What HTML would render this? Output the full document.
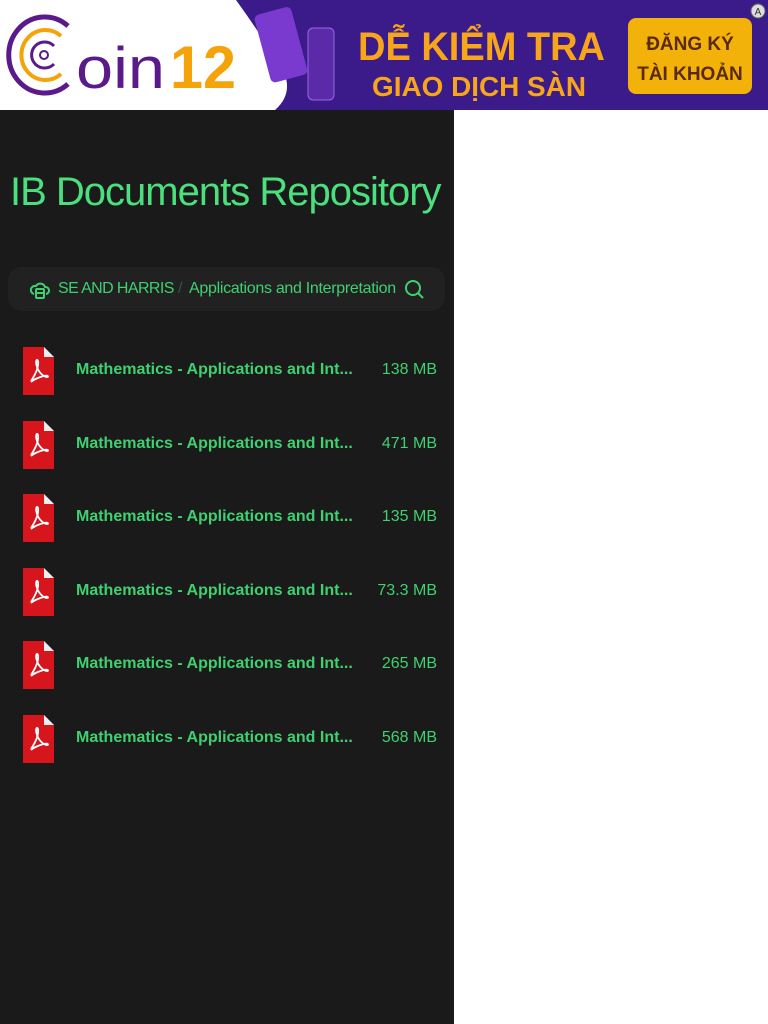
<!DOCTYPE html>
<html><head><meta charset="utf-8"><style>
*{margin:0;padding:0;box-sizing:border-box}
body{width:768px;height:1024px;background:#fff;font-family:"Liberation Sans",sans-serif;position:relative;overflow:hidden}
.ad{position:absolute;left:0;top:0;width:768px;height:110px;background:#3b1a8a;overflow:hidden}
.side{position:absolute;left:0;top:110px;width:454px;height:914px;background:#1a1a1a}
.title{position:absolute;left:10px;top:170px;font-size:40px;color:#4be07d;letter-spacing:-1px;white-space:nowrap}
.bc{position:absolute;left:8px;top:267px;width:437px;height:44px;background:#212121;border-radius:14px;color:#3fd070;font-size:16px;white-space:nowrap}
.row{position:absolute;left:0;width:454px;height:50px}
.row .name{position:absolute;left:76px;top:14px;font-size:16px;font-weight:bold;color:#3fd070}
.row .size{position:absolute;right:17px;top:14px;font-size:16px;color:#3fd070}
.row svg{position:absolute;left:23px;top:0}
</style></head><body>
<div class="ad">
<svg width="768" height="110" style="position:absolute;left:0;top:0">
<path d="M0 0H236Q265 40 285 75Q292 95 275 110H0Z" fill="#fff"/>
<g transform="translate(6 0)">
<path d="M62 26A36 38 0 1 0 62 84" fill="none" stroke="#5a1a8a" stroke-width="5"/>
<path d="M55 36A24 25 0 1 0 55 74" fill="none" stroke="#f5a30a" stroke-width="4"/>
<path d="M48 46A13 13 0 1 0 48 64" fill="none" stroke="#5a1a8a" stroke-width="3"/>
<circle cx="38" cy="55" r="4" fill="none" stroke="#5a1a8a" stroke-width="2"/>
</g>
<text x="76" y="88" font-family="Liberation Sans" font-size="58" fill="#5a1a8a" textLength="89" lengthAdjust="spacingAndGlyphs">oin</text>
<text x="170" y="88" font-family="Liberation Sans" font-weight="bold" font-size="60" fill="#f5a30a" textLength="66" lengthAdjust="spacingAndGlyphs">12</text>
<rect x="262" y="10" width="38" height="70" rx="5" fill="#7a3ad0" transform="rotate(-15 280 45)"/>
<rect x="308" y="28" width="26" height="72" rx="5" fill="#5a2aa8" stroke="#9a6ae0"/>
<text x="358" y="60" font-family="Liberation Sans" font-weight="bold" font-size="40" fill="#f7a51a" textLength="247" lengthAdjust="spacingAndGlyphs">DỄ KIỂM TRA</text>
<text x="372" y="96" font-family="Liberation Sans" font-weight="bold" font-size="28" fill="#f7a51a" textLength="214" lengthAdjust="spacingAndGlyphs">GIAO DỊCH SÀN</text>
<rect x="628" y="18" width="124" height="76" rx="8" fill="#f2b20a"/>
<text x="690" y="50" text-anchor="middle" font-family="Liberation Sans" font-weight="bold" font-size="19" fill="#5a2a10">ĐĂNG KÝ</text>
<text x="690" y="80" text-anchor="middle" font-family="Liberation Sans" font-weight="bold" font-size="19" fill="#5a2a10">TÀI KHOẢN</text>
<circle cx="758" cy="11" r="7" fill="#ddd" stroke="#666"/>
<text x="758" y="15" text-anchor="middle" font-size="10" fill="#333">A</text>
</svg>
</div>
<div class="side"></div>
<div class="title">IB Documents Repository</div>
<div class="bc">
<svg width="20" height="20" style="position:absolute;left:22px;top:13px" fill="none" stroke="#3fd070" stroke-width="2"><path d="M4 14a4 4 0 0 1 2-8a5 5 0 0 1 9 1a3.5 3.5 0 0 1 1 7"/><rect x="6" y="9" width="8" height="9" rx="1"/><path d="M6 13h8"/></svg>
<span style="position:absolute;left:50px;top:13px;font-size:16px;letter-spacing:-0.6px">SE AND HARRIS</span>
<span style="position:absolute;left:170px;top:13px;color:#2f5a3c">/</span>
<span style="position:absolute;left:181px;top:13px;font-size:16px;letter-spacing:-0.3px">Applications and Interpretation</span>
<svg width="22" height="22" style="position:absolute;left:396px;top:12px" fill="none" stroke="#3fd070" stroke-width="2"><circle cx="9" cy="9" r="7"/><path d="M14 14l5 5"/></svg>
</div>
<div id="rows"></div>
<script>
var s=["138 MB","471 MB","135 MB","73.3 MB","265 MB","568 MB"],h="";
for(var i=0;i<6;i++){var y=347+i*73.6;
h+='<div class="row" style="top:'+y+'px"><svg width="31" height="48"><path d="M0 0H21L31 10V48H0Z" fill="#d6161c"/><path d="M21 0L31 10H21Z" fill="#eee"/><path d="M8 34c4-6 8-14 7-20c-1-3-3 0-1 6c2 6 7 10 10 10c2 0 1-2-3-1c-5 1-11 4-13 6" fill="none" stroke="#fff" stroke-width="1.8"/></svg><div class="name">Mathematics - Applications and Int...</div><div class="size">'+s[i]+'</div></div>';}
document.getElementById("rows").innerHTML=h;
</script>
</body></html>
